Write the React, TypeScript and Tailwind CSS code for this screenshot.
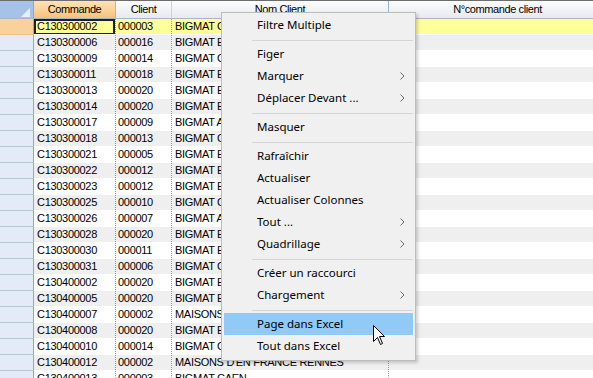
import React from "react";

const rows: [string, string, string][] = [
  ["C130300002", "000003", "BIGMAT CAEN"],
  ["C130300006", "000016", "BIGMAT EVREUX"],
  ["C130300009", "000014", "BIGMAT CAEN"],
  ["C130300011", "000018", "BIGMAT EVREUX"],
  ["C130300013", "000020", "BIGMAT EVREUX"],
  ["C130300014", "000020", "BIGMAT EVREUX"],
  ["C130300017", "000009", "BIGMAT ALENCON"],
  ["C130300018", "000013", "BIGMAT CAEN"],
  ["C130300021", "000005", "BIGMAT EVREUX"],
  ["C130300022", "000012", "BIGMAT EVREUX"],
  ["C130300023", "000012", "BIGMAT EVREUX"],
  ["C130300025", "000010", "BIGMAT CAEN"],
  ["C130300026", "000007", "BIGMAT ALENCON"],
  ["C130300028", "000020", "BIGMAT EVREUX"],
  ["C130300030", "000011", "BIGMAT EVREUX"],
  ["C130300031", "000006", "BIGMAT CAEN"],
  ["C130400002", "000020", "BIGMAT EVREUX"],
  ["C130400005", "000020", "BIGMAT EVREUX"],
  ["C130400007", "000002", "MAISONS D'EN FRANCE RENNES"],
  ["C130400008", "000020", "BIGMAT EVREUX"],
  ["C130400010", "000014", "BIGMAT CAEN"],
  ["C130400012", "000002", "MAISONS D'EN FRANCE RENNES"],
  ["C130400013", "000003", "BIGMAT CAEN"],
];

type MenuEntry = { label: string; sub?: boolean; active?: boolean } | "sep";

const menu: MenuEntry[] = [
  { label: "Filtre Multiple" },
  "sep",
  { label: "Figer" },
  { label: "Marquer", sub: true },
  { label: "Déplacer Devant ...", sub: true },
  "sep",
  { label: "Masquer" },
  "sep",
  { label: "Rafraîchir" },
  { label: "Actualiser" },
  { label: "Actualiser Colonnes" },
  { label: "Tout ...", sub: true },
  { label: "Quadrillage", sub: true },
  "sep",
  { label: "Créer un raccourci" },
  { label: "Chargement", sub: true },
  "sep",
  { label: "Page dans Excel", active: true },
  { label: "Tout dans Excel" },
];

function Chevron() {
  return (
    <svg width="5" height="8" viewBox="0 0 5 8" className="shrink-0">
      <polyline points="0.5,0.5 4,4 0.5,7.5" fill="none" stroke="#6a6a6a" strokeWidth="1" />
    </svg>
  );
}

export default function App() {
  return (
    <div className="relative w-[593px] h-[378px] overflow-hidden bg-white font-['Liberation_Sans',Arial,sans-serif] text-[11px] text-black">
      {/* Header */}
      <div className="flex h-[19px] border-t border-[#6e6e6e] border-b border-b-[#a9b6c6]">
        <div className="w-[34px] shrink-0 bg-[#a6c2e8] border-r border-[#8ea7c8] flex items-end justify-end pr-[3px] pb-[1px]">
          <svg width="9" height="9" viewBox="0 0 9 9">
            <polygon points="0,9 9,0 9,9" fill="#e9eff8" />
          </svg>
        </div>
        <div className="w-[82px] shrink-0 bg-linear-to-b from-[#fde3b6] to-[#f6c27c] border-r border-[#d9b27a] flex items-center justify-center tracking-[-0.4px]">
          Commande
        </div>
        <div className="w-[56px] shrink-0 bg-linear-to-b from-[#fcfcfc] to-[#e7eaee] border-r border-[#c9d2de] flex items-center justify-center tracking-[-0.4px]">
          Client
        </div>
        <div className="w-[217px] shrink-0 bg-linear-to-b from-[#fcfcfc] to-[#e7eaee] border-r border-[#93b3da] flex items-center justify-center tracking-[-0.4px]">
          Nom Client
        </div>
        <div className="w-[217px] shrink-0 bg-linear-to-b from-[#fcfcfc] to-[#e7eaee] flex items-center justify-center tracking-[-0.4px]">
          N°commande client
        </div>
      </div>

      {/* Rows */}
      {rows.map((r, i) => {
        const sel = i === 0;
        const bg = sel ? "bg-[#ffff9a]" : i % 2 === 1 ? "bg-[#efefef]" : "bg-white";
        return (
          <div key={i} className="flex h-[16px]">
            <div
              className={`w-[34px] shrink-0 border-r border-[#91a8c6] border-b ${
                sel ? "bg-[#f9d19a] border-b-[#e8c08a]" : "bg-[#e3ebf6] border-b-[#b5c5da]"
              }`}
            />
            <div className={`flex flex-1 border-b border-white ${bg}`}>
              <div className="relative w-[82px] shrink-0 border-r border-dotted border-[#9a9a9a] pl-[3px] flex items-center tracking-[-0.3px] whitespace-nowrap overflow-hidden">
                {r[0]}
                {sel && <div className="absolute inset-x-0 top-0 -bottom-[1px] border-2 border-[#1c1c2c]" />}
              </div>
              <div className="w-[56px] shrink-0 border-r border-dotted border-[#9a9a9a] pl-[2px] flex items-center tracking-[-0.3px] whitespace-nowrap overflow-hidden">
                {r[1]}
              </div>
              <div className="w-[217px] shrink-0 border-r border-dotted border-[#9a9a9a] pl-[3px] flex items-center tracking-[-0.3px] whitespace-nowrap overflow-hidden">
                {r[2]}
              </div>
              <div className="w-[217px] shrink-0" />
            </div>
          </div>
        );
      })}

      {/* Context menu */}
      <div className="absolute left-[221px] top-[12px] w-[195px] bg-[#f0f0f0] border border-[#bcbcbc] px-[2px] pt-[1px] pb-[3px] shadow-[2px_2px_3px_rgba(0,0,0,0.18)] font-['Noto_Sans','Open_Sans',sans-serif] text-[11.5px] text-black">
        {menu.map((m, i) =>
          m === "sep" ? (
            <div key={i} className="h-[7px] pt-[4px] pl-[28px]">
              <div className="h-px bg-[#d6d6d6]" />
            </div>
          ) : (
            <div
              key={i}
              className={`h-[22px] flex items-center pl-[33px] pr-[8px] ${m.active ? "bg-[#91c9f7]" : ""}`}
            >
              <span className="flex-1 whitespace-nowrap">{m.label}</span>
              {m.sub && <Chevron />}
            </div>
          )
        )}
      </div>

      {/* Mouse cursor */}
      <svg
        className="absolute left-[373px] top-[325px]"
        width="13"
        height="21"
        viewBox="0 0 13 21"
      >
        <polygon
          points="0.5,0.5 0.5,16.5 4.5,12.5 7.5,19.5 9.5,18.5 6.5,11.5 11.5,11.5"
          fill="#ffffff"
          stroke="#000000"
          strokeWidth="1"
          strokeLinejoin="miter"
        />
      </svg>
    </div>
  );
}
